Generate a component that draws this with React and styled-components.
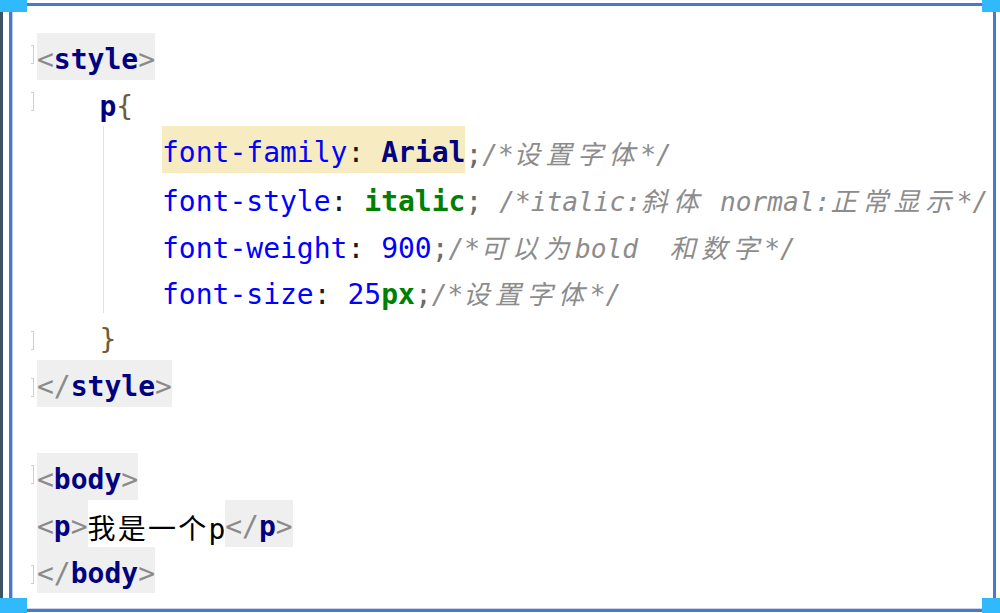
import React from "react";
import styled, { createGlobalStyle, css } from "styled-components";

const Global = createGlobalStyle`
  html, body { margin: 0; padding: 0; background: #ffffff; }
  #root { width: 1000px; height: 613px; }
`;

const Page = styled.div`
  position: relative;
  width: 1000px;
  height: 613px;
  box-sizing: border-box;
  background: #ffffff;
  box-shadow: inset 3px 0 0 #3d5262;
  padding: 3px 4px 1px 9px;
  overflow: hidden;
`;

const Frame = styled.div`
  height: 100%;
  box-sizing: border-box;
  border: 3px solid #4a78cc;
  box-shadow: inset 1px 0 0 #b9cbec, inset 0 -1px 0 #c9d6ee;
  padding-top: 27px;
  display: flex;
  flex-direction: column;
`;

const Handle = styled.div`
  position: absolute;
  background: #30b9fd;
  width: ${(p) => p.$w}px;
  height: ${(p) => p.$h}px;
  ${(p) => (p.$top ? "top: 0;" : "bottom: 0;")}
  ${(p) => (p.$left ? "left: 0;" : "right: 0;")}
`;

const Row = styled.div`
  display: flex;
  align-items: stretch;
  height: 46.7px;
  font-family: "DejaVu Sans Mono", "Liberation Mono", "Noto Sans CJK SC", monospace;
  font-size: 28px;
`;

const Gutter = styled.div`
  flex: none;
  width: 25px;
  position: relative;
`;

const FoldMark = styled.span`
  position: absolute;
  left: 19px;
  top: ${(p) => (p.$end ? 18 : 12)}px;
  width: 3px;
  height: 19px;
  border: 1.5px solid #cfcfcf;
  border-left: none;
  box-sizing: border-box;
`;

const Indent = styled.span`
  flex: none;
  width: ${(p) => p.$level * 62.5}px;
  position: relative;
  ${(p) =>
    p.$guide &&
    css`
      &::before {
        content: "";
        position: absolute;
        left: 66px;
        top: 0;
        bottom: 0;
        width: 1px;
        background: #e1e1e1;
      }
    `}
`;

const Seg = styled.span`
  flex: none;
  padding-top: 8px;
  line-height: 38.7px;
  white-space: pre;
  color: #000000;
  background: ${(p) =>
    p.$bg === "tag" ? "#efefef" : p.$bg === "caret" ? "#f6ebc1" : "transparent"};
`;

const Bracket = styled.span`
  color: #8a8a8a;
`;

const TagName = styled.span`
  color: #000080;
  font-weight: bold;
`;

const Brace = styled.span`
  color: #6e5d34;
`;

const Prop = styled.span`
  color: #0000ff;
`;

const Punct = styled.span`
  color: #1a1a1a;
`;

const Semi = styled.span`
  color: #6a6a6a;
`;

const Ident = styled.span`
  color: #000080;
  font-weight: bold;
`;

const Keyword = styled.span`
  color: #008000;
  font-weight: bold;
`;

const Num = styled.span`
  color: #0000ff;
`;

const Comment = styled.span`
  color: #8c8c8c;
  font-style: italic;
  font-size: 26.2px;
`;

const Han = styled.span`
  font-family: "Noto Sans CJK SC", sans-serif;
  letter-spacing: ${(p) => p.$ls}px;
`;

const Tag = ({ close, name }) => (
  <Seg $bg="tag">
    <Bracket>{close ? "</" : "<"}</Bracket>
    <TagName>{name}</TagName>
    <Bracket>&gt;</Bracket>
  </Seg>
);

const Line = ({ fold, children }) => (
  <Row>
    <Gutter>{fold && <FoldMark $end={fold === "end"} />}</Gutter>
    {children}
  </Row>
);

export default function App() {
  return (
    <>
      <Global />
      <Page>
        <Frame>
          <Line fold="start">
            <Tag name="style" />
          </Line>
          <Line fold="start">
            <Indent $level={1} />
            <Seg>
              <TagName>p</TagName>
              <Brace>{"{"}</Brace>
            </Seg>
          </Line>
          <Line>
            <Indent $level={2} $guide />
            <Seg $bg="caret">
              <Prop>font-family</Prop>
              <Punct>: </Punct>
              <Ident>Arial</Ident>
            </Seg>
            <Seg>
              <Semi>;</Semi>
              <Comment>
                /*<Han $ls={5.4}>设置字体</Han>*/
              </Comment>
            </Seg>
          </Line>
          <Line>
            <Indent $level={2} $guide />
            <Seg>
              <Prop>font-style</Prop>
              <Punct>: </Punct>
              <Keyword>italic</Keyword>
              <Semi>; </Semi>
              <Comment>
                /*italic:<Han $ls={5.4}>斜体</Han> normal:<Han $ls={5.4}>正常显示</Han>*/
              </Comment>
            </Seg>
          </Line>
          <Line>
            <Indent $level={2} $guide />
            <Seg>
              <Prop>font-weight</Prop>
              <Punct>: </Punct>
              <Num>900</Num>
              <Semi>;</Semi>
              <Comment>
                /*<Han $ls={5.4}>可以为</Han>bold  <Han $ls={5.4}>和数字</Han>*/
              </Comment>
            </Seg>
          </Line>
          <Line>
            <Indent $level={2} $guide />
            <Seg>
              <Prop>font-size</Prop>
              <Punct>: </Punct>
              <Num>25</Num>
              <Keyword>px</Keyword>
              <Semi>;</Semi>
              <Comment>
                /*<Han $ls={5.4}>设置字体</Han>*/
              </Comment>
            </Seg>
          </Line>
          <Line fold="end">
            <Indent $level={1} />
            <Seg>
              <Brace>{"}"}</Brace>
            </Seg>
          </Line>
          <Line fold="end">
            <Tag close name="style" />
          </Line>
          <Line />
          <Line fold="start">
            <Tag name="body" />
          </Line>
          <Line>
            <Tag name="p" />
            <Seg>
              <Han $ls={2.2}>我是一个</Han>p
            </Seg>
            <Tag close name="p" />
          </Line>
          <Line fold="end">
            <Tag close name="body" />
          </Line>
        </Frame>
        <Handle $top $left $w={27} $h={12} />
        <Handle $top $w={18} $h={12} />
        <Handle $left $w={27} $h={15} />
        <Handle $w={18} $h={15} />
      </Page>
    </>
  );
}
